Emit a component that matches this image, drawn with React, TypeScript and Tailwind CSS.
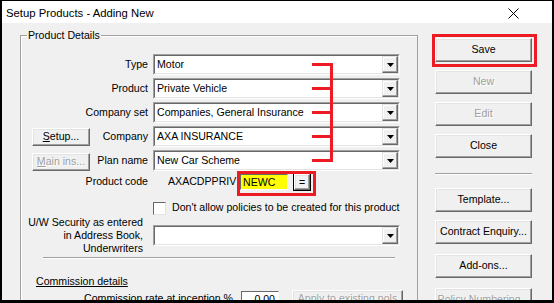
import type { ReactNode } from "react";

const RED = "bg-[#ed1c24]";

function Arrow() {
  return (
    <svg width="7" height="4" viewBox="0 0 7 4" className="block">
      <polygon points="0,0 7,0 3.5,4" fill="#000" />
    </svg>
  );
}

function Combo({ value, w = "w-[247px]" }: { value: string; w?: string }) {
  return (
    <div className={`flex h-[21px] ${w} border border-t-[#a0a0a0] border-l-[#a0a0a0] border-b-white border-r-white`}>
      <div className="flex flex-1 border border-t-[#696969] border-l-[#696969] border-b-[#e3e3e3] border-r-[#e3e3e3] bg-white">
        <span className="flex-1 whitespace-nowrap pl-[2px] leading-[17px]">{value}</span>
        <span className="flex w-[16px] items-center justify-center border border-t-[#e3e3e3] border-l-[#e3e3e3] border-b-[#696969] border-r-[#696969] bg-[#f0f0f0] shadow-[inset_-1px_-1px_0_#a0a0a0,inset_1px_1px_0_#fff]">
          <Arrow />
        </span>
      </div>
    </div>
  );
}

function Btn({ children, disabled, className = "" }: { children: ReactNode; disabled?: boolean; className?: string }) {
  return (
    <div
      className={`flex shrink-0 items-center justify-center whitespace-nowrap border border-t-white border-l-white border-b-[#696969] border-r-[#696969] bg-[#f0f0f0] shadow-[inset_-1px_-1px_0_#a0a0a0,inset_1px_1px_0_#e3e3e3] ${
        disabled ? "text-[#a0a0a0] [text-shadow:1px_1px_0_#fff]" : "text-black"
      } ${className}`}
    >
      {children}
    </div>
  );
}

function Etched({ className = "" }: { className?: string }) {
  return <div className={`h-[2px] shrink-0 border-t border-t-[#a0a0a0] border-b border-b-white ${className}`} />;
}

export default function App() {
  return (
    <div className="flex h-[303px] w-[554px] flex-col overflow-hidden border-t border-l-2 border-r-2 border-b-[3px] border-black bg-[#f0f0f0] font-['Liberation_Sans',Arial,sans-serif] text-[10.6px] text-black">
      {/* title bar */}
      <div className="flex h-[22px] shrink-0 items-center justify-between bg-white pl-[4px] pr-[33px] pt-[2px]">
        <span className="text-[11.3px]">Setup Products - Adding New</span>
        <svg width="11" height="11" viewBox="0 0 11 11">
          <path d="M0.5 0.5 L10.5 10.5 M10.5 0.5 L0.5 10.5" stroke="#000" strokeWidth="1" />
        </svg>
      </div>

      <div className="flex min-h-0 flex-1">
        {/* Product Details group */}
        <div className="relative ml-[18px] mt-[12px] w-[398px] shrink-0 self-start border border-[#a0a0a0] pb-[20px] pt-[18px] shadow-[inset_1px_1px_0_#fff]">
          <span className="absolute -top-[7px] left-[6px] bg-[#f0f0f0] px-[1px] leading-[13px]">Product Details</span>

          <div className="relative flex flex-col gap-[3px]">
            <div className="flex h-[21px] items-center">
              <div className="w-[127px] text-right">Type</div>
              <div className="ml-[5px]"><Combo value="Motor" /></div>
            </div>
            <div className="flex h-[21px] items-center">
              <div className="w-[127px] text-right">Product</div>
              <div className="ml-[5px]"><Combo value="Private Vehicle" /></div>
            </div>
            <div className="flex h-[21px] items-center">
              <div className="w-[127px] text-right">Company set</div>
              <div className="ml-[5px]"><Combo value="Companies, General Insurance" /></div>
            </div>
            <div className="flex h-[21px] items-center">
              <div className="flex w-[127px] items-center justify-between pl-[11px]">
                <Btn className="h-[18px] w-[58px]"><span><span className="underline">S</span>etup...</span></Btn>
                <span>Company</span>
              </div>
              <div className="ml-[5px]"><Combo value="AXA INSURANCE" /></div>
            </div>
            <div className="flex h-[21px] items-center">
              <div className="flex w-[127px] items-center justify-between pl-[11px]">
                <Btn disabled className="mt-[2px] h-[18px] w-[58px]"><span><span className="underline">M</span>ain ins...</span></Btn>
                <span>Plan name</span>
              </div>
              <div className="ml-[5px]"><Combo value="New Car Scheme" /></div>
            </div>

            {/* annotation bracket */}
            <div className={`absolute left-[291px] top-[9px] h-[3px] w-[21px] ${RED}`} />
            <div className={`absolute left-[291px] top-[33px] h-[3px] w-[21px] ${RED}`} />
            <div className={`absolute left-[291px] top-[57px] h-[3px] w-[21px] ${RED}`} />
            <div className={`absolute left-[291px] top-[81px] h-[3px] w-[21px] ${RED}`} />
            <div className={`absolute left-[291px] top-[105px] h-[3px] w-[21px] ${RED}`} />
            <div className={`absolute left-[309px] top-[9px] h-[99px] w-[3px] ${RED}`} />
          </div>

          {/* product code */}
          <div className="relative mt-[1px] flex h-[20px] items-center">
            <div className="w-[127px] text-right">Product code</div>
            <span className="ml-[20px] w-[72px] overflow-hidden whitespace-nowrap">AXACDPPRIV</span>
            <div className="flex h-[16px] w-[48px] border border-t-[#696969] border-l-[#696969] border-b-white border-r-white bg-[#ffff00]">
              <span className="pl-[2px] leading-[14px]">NEWC</span>
            </div>
            <div className="ml-[5px] h-[18px] w-[18px] border border-black">
              <Btn className="h-full w-full leading-none">=</Btn>
            </div>
            <div className="absolute left-[216px] -top-[1px] h-[25px] w-[79px] border-[3px] border-[#ed1c24]" />
          </div>

          {/* checkbox */}
          <div className="mt-[9px] flex h-[14px] items-center">
            <div className="ml-[132px] h-[13px] w-[13px] border border-t-[#696969] border-l-[#696969] border-b-[#e3e3e3] border-r-[#e3e3e3] bg-white" />
            <span className="ml-[6px] whitespace-nowrap">Don't allow policies to be created for this product</span>
          </div>

          {/* U/W security */}
          <div className="mt-[1px] flex items-start">
            <div className="w-[122px] whitespace-nowrap text-right leading-[13px]">
              U/W Security as entered
              <br />
              in Address Book,
              <br />
              Underwriters
            </div>
            <div className="ml-[10px] mt-[9px]"><Combo value="" /></div>
          </div>

          <Etched className="ml-[22px] mt-[2px] w-[352px]" />

          <div className="ml-[15px] mt-[16px] leading-[13px] underline">Commission details</div>

          <div className="mt-[2px] flex h-[18px] items-center">
            <div className="w-[212px] whitespace-nowrap text-right">Commission rate at inception %</div>
            <div className="ml-[8px] h-[17px] w-[38px] border border-t-[#696969] border-l-[#696969] border-b-white border-r-white bg-white pr-[3px] text-right leading-[15px]">0.00</div>
            <Btn disabled className="ml-[13px] h-[18px] w-[111px]">Apply to existing pols</Btn>
          </div>
        </div>

        {/* right-hand buttons */}
        <div className="ml-[17px] flex w-[97px] shrink-0 flex-col pt-[15px]">
          <div className="relative shrink-0">
            <Btn className="h-[24px]">Save</Btn>
            <div className="absolute -bottom-[5px] -left-[3px] -right-[5px] -top-[4px] border-[3px] border-[#ed1c24]" />
          </div>
          <Btn disabled className="mt-[8px] h-[24px]">New</Btn>
          <Btn disabled className="mt-[8px] h-[24px]">Edit</Btn>
          <Btn className="mt-[8px] h-[24px]">Close</Btn>
          <Etched className="mt-[15px]" />
          <Btn className="mt-[13px] h-[24px]">Template...</Btn>
          <Btn className="mt-[8px] h-[24px]">Contract Enquiry...</Btn>
          <Btn className="mt-[10px] h-[24px]">Add-ons...</Btn>
          <Btn disabled className="mt-[10px] h-[24px]">Policy Numbering...</Btn>
        </div>
      </div>
    </div>
  );
}
